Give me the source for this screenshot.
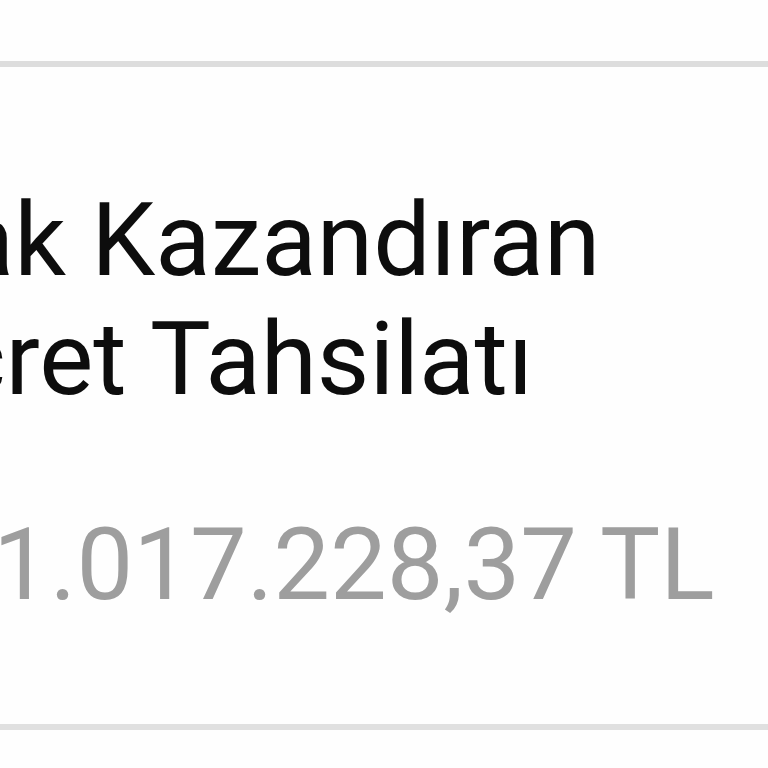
export default function App() {
  return (
    <div className="w-[768px] h-[768px] overflow-hidden bg-[#fefefe] font-['Roboto',sans-serif]">
      <div className="h-[61px]" />
      <div className="h-[6px] bg-[#dddddd]" />
      <div className="pt-[114px] pb-[100px]">
        <h2 className="-ml-[114px] text-[102px] leading-[119px] text-[#0d0d0d] whitespace-nowrap">
          Hak Kazandıran
          <br />
          Ücret Tahsilatı
        </h2>
        <p className="-ml-[7px] mt-[86px] text-[101px] leading-[119px] text-[#9e9e9e] whitespace-nowrap">
          1.017.228,37 TL
        </p>
      </div>
      <div className="h-[6px] bg-[#e0e0e0]" />
    </div>
  );
}
